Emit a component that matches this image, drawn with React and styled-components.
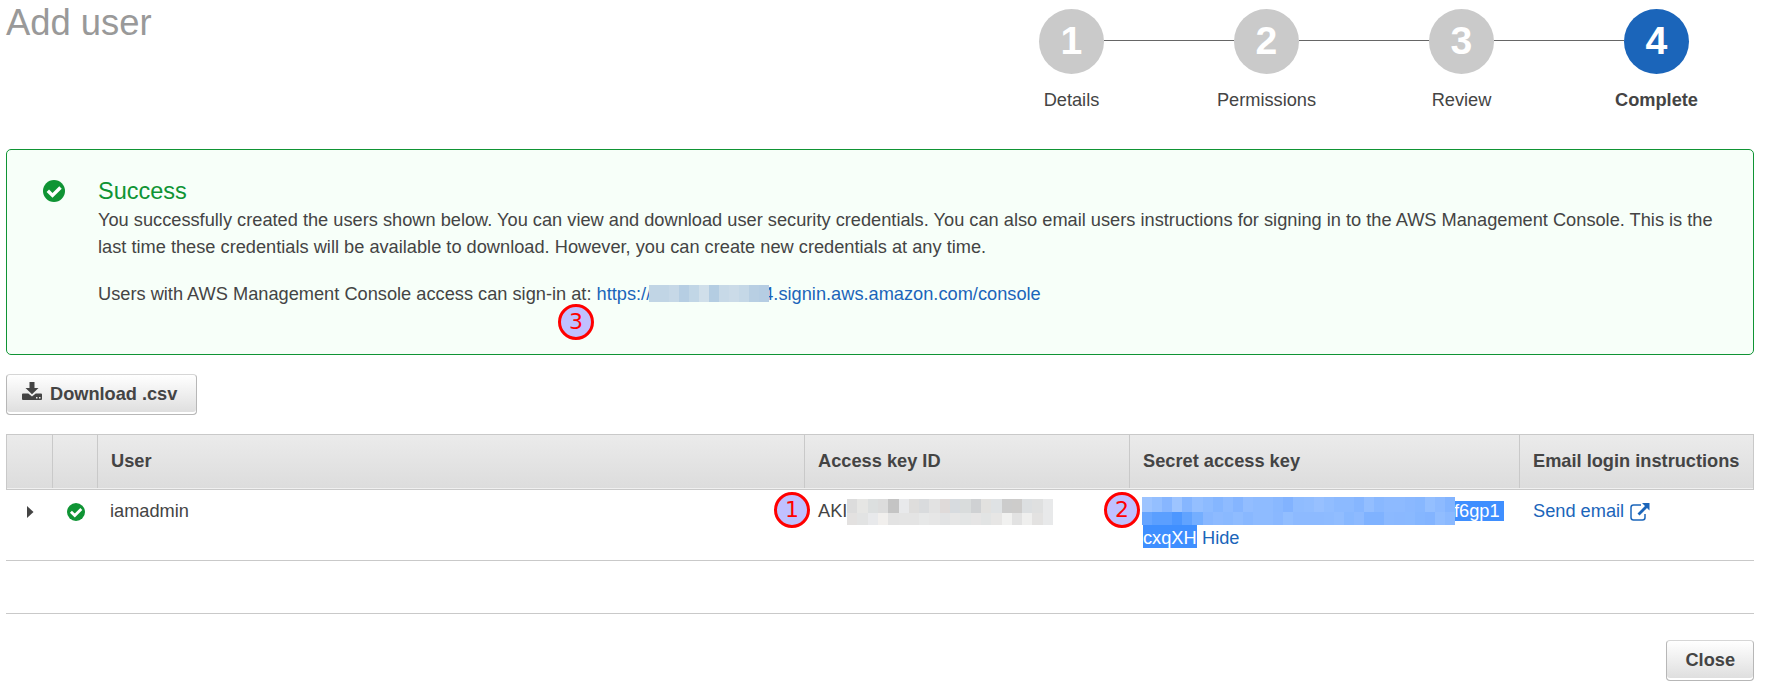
import React from "react";
import styled, { createGlobalStyle } from "styled-components";

const Global = createGlobalStyle`
  body { margin: 0; background: #fff; font-family: "Liberation Sans", Arial, sans-serif; font-size: 18.225px; line-height: 27px; color: #444; }
  * { box-sizing: border-box; }
`;

const Page = styled.main`
  height: 693px;
  padding: 0 15px 0 6px;
  overflow: hidden;
`;
const Header = styled.header`
  display: flex;
  justify-content: space-between;
  height: 149px;
`;
const Title = styled.h1`
  margin: 2px 0 0;
  font-size: 36.4px;
  line-height: 42px;
  font-weight: 400;
  color: #999;
`;
const Steps = styled.ol`
  display: flex;
  margin: 9px 0 0;
  padding: 0;
  list-style: none;
`;
const Step = styled.li`
  width: 195px;
  display: flex;
  flex-direction: column;
  align-items: center;
  font-weight: ${(p) => (p.$active ? 700 : 400)};
`;
const Track = styled.div`
  width: 100%;
  display: flex;
  align-items: flex-start;
`;
const Line = styled.span`
  flex: 1;
  height: 1px;
  margin-top: 31px;
  background: ${(p) => (p.$hidden ? "transparent" : "#666")};
`;
const Circle = styled.span`
  width: 65px;
  height: 65px;
  border-radius: 50%;
  background: ${(p) => (p.$active ? "#1b65ba" : "#cacaca")};
  color: #fff;
  font-size: 39.2px;
  font-weight: 700;
  line-height: 63px;
  text-align: center;
`;
const StepName = styled.span`
  margin-top: 13px;
`;
const Alert = styled.section`
  display: flex;
  height: 206px;
  padding: 27px 36px 0 36px;
  border: 1px solid #0f9434;
  border-radius: 5px;
  background: #f7fff9;
`;
const AlertIcon = styled.div`
  width: 55px;
  padding-top: 3px;
`;
const AlertBody = styled.div`
  flex: 1;
`;
const AlertTitle = styled.h2`
  margin: 0 0 2px;
  font-size: 23.5px;
  line-height: 28px;
  font-weight: 400;
  color: #0f9434;
`;
const Text = styled.p`
  margin: 0 0 20px;
`;
const Link = styled.a`
  color: #1b65ba;
  text-decoration: none;
`;
const Button = styled.button`
  display: flex;
  align-items: center;
  gap: 8px;
  height: 41px;
  padding: ${(p) => p.$pad};
  border: 1px solid #b7b7b7;
  border-top-color: #d6d6d6;
  border-radius: 4px;
  background: linear-gradient(#fff, #ddd);
  box-shadow: inset 0 -2px 0 #fff;
  color: #444;
  font: 700 18.2px "Liberation Sans", Arial, sans-serif;
`;
const Toolbar = styled.div`
  display: flex;
  padding: 19px 0;
`;
const Table = styled.div`
  border-bottom: 1px solid #c9c9c9;
  height: 180px;
`;
const Row = styled.div`
  display: grid;
  grid-template-columns: 46px 45px 707px 325px 390px 1fr;
`;
const HeadRow = styled(Row)`
  height: 56px;
  border: 1px solid #c9c9c9;
  background: linear-gradient(#ebebeb, #dcdcdc);
  box-shadow: inset 0 -1px 0 #f0f0f0;
`;
const HeadCell = styled.div`
  height: 53px;
  padding: 13px 0 0 13px;
  border-right: ${(p) => (p.$last ? 0 : 1)}px solid #c9c9c9;
  font-weight: 700;
  white-space: nowrap;
`;
const BodyRow = styled(Row)`
  height: 71px;
  padding-left: 1px;
  border-bottom: 1px solid #c9c9c9;
`;
const Cell = styled.div`
  position: relative;
  padding: 8px 0 0 ${(p) => (p.$left ?? 13)}px;
  white-space: nowrap;
`;
const IconCell = styled.div`
  padding: 13px 0 0 ${(p) => p.$left}px;
  line-height: 0;
`;
const Selected = styled.span`
  background: #3f8fff;
  color: #fff;
`;
const SecretLine = styled.div`
  display: flex;
  align-items: flex-start;
  height: 27px;
`;
const SelectedBox = styled(Selected)`
  width: ${(p) => p.$w}px;
  height: ${(p) => p.$h}px;
  line-height: ${(p) => p.$lh}px;
  margin-top: ${(p) => p.$top}px;
  margin-right: 5px;
`;
const Gap = styled.span`
  position: relative;
  display: inline-block;
  width: 112px;
  height: 17px;
  vertical-align: -2px;
`;
const Mosaic = styled.span`
  position: absolute;
  left: ${(p) => p.$left}px;
  top: ${(p) => p.$topPos}px;
  display: grid;
  grid-template-columns: repeat(${(p) => p.$cols}, 1fr);
  grid-template-rows: ${(p) => p.$rows};
  width: ${(p) => p.$w}px;
`;
const Tile = styled.i`
  background: ${(p) => p.$c};
`;
const LinkLine = styled.p`
  position: relative;
  margin: 0;
`;
const Marker = styled.span`
  position: absolute;
  left: ${(p) => p.$x}px;
  top: ${(p) => p.$y}px;
  width: 36px;
  height: 36px;
  border: 3px solid #f00;
  border-radius: 50%;
  background: #c0c0ff;
  color: #f00;
  font: 22px/30px "DejaVu Sans", sans-serif;
  text-align: center;
`;
const Footer = styled.footer`
  display: flex;
  justify-content: flex-end;
  padding-top: 26px;
`;

const urlTiles = ["#c1d5e5", "#c1d5e5", "#c6d8e7", "#b6cee3", "#c1d6e6", "#d0dfea", "#b4cde2", "#c7d9e7", "#cbdbe8", "#c5d8e7", "#b8cfe3", "#b5cde3"];
const keyTiles = [
  "#dcdcdc", "#e6e6e4", "#dcdfdf", "#dcdcdc", "#c4c4c4", "#e8e9eb", "#dedddc", "#d9dbdd", "#e2e2e2", "#dfdad9",
  "#d7dbdf", "#d9dcdc", "#cfd1d3", "#e2e1df", "#dfe2e4", "#cccccc", "#cdcccb", "#dcdfe1", "#dfe0e0", "#e8e9ea",
  "#e3e1e0", "#e2e3e3", "#e8e9eb", "#f1efed", "#e3e3e3", "#e4e4e4", "#e4e4e4", "#e7e8e8", "#e6e6e6", "#e2e3e4",
  "#e6e6e6", "#e3e5e5", "#e6e5e5", "#e2e4e4", "#e7e6e5", "#f1f1f0", "#e2e2e2", "#efefee", "#e3e2e1", "#e8e9ea",
];
const secretTiles = [
  "#9dc4ff", "#94bfff", "#87b6ff", "#9dc4ff", "#86b6ff", "#94bfff", "#8dbbff", "#85b6ff", "#8ebbff", "#85b5ff", "#92bdff", "#8ebbff", "#8ebbff", "#89b8ff", "#82b3ff", "#8fbcff",
  "#91bdff", "#97c0ff", "#91bdff", "#8cbaff", "#8cbaff", "#86b6ff", "#93beff", "#89b8ff", "#8dbaff", "#8dbaff", "#8ab8ff", "#87b7ff", "#94bfff", "#8dbaff", "#83b4ff",
  "#66a5ff", "#5b9fff", "#5b9fff", "#4d97ff", "#61a3ff", "#74aeff", "#88b7ff", "#8dbaff", "#8ab9ff", "#8fbcff", "#89b8ff", "#8ebbff", "#8ebbff", "#8ab8ff", "#92beff", "#8dbaff",
  "#8dbaff", "#8dbaff", "#8ebbff", "#91bdff", "#88b8ff", "#8dbaff", "#7fb2ff", "#7fb2ff", "#8bb9ff", "#8ab8ff", "#8ab9ff", "#85b6ff", "#83b4ff", "#91bdff", "#8bb9ff",
];
const steps = ["Details", "Permissions", "Review", "Complete"];

const Check = ({ size }) => (
  <svg width={size} height={size} viewBox="0 0 22 22">
    <circle cx="11" cy="11" r="11" fill="#0f9434" />
    <path d="M4.800 10.800l4.700 4.600 8-8" fill="none" stroke="#fff" strokeWidth="3.500" />
  </svg>
);
const DownloadShape = styled.svg`
  margin-bottom: 7px;
`;
const DownloadIcon = () => (
  <DownloadShape width="20" height="18" viewBox="0 0 20 18" fill="#444">
    <path d="M7.500 0h5v6h4L10 12.300 3.500 6h4z" />
    <path fillRule="evenodd" d="M1 11.500h5.300l3.700 3 3.700-3H19q1 0 1 1V17q0 1-1 1H1q-1 0-1-1v-4.500q0-1 1-1zM14 15v1.500h1.500V15zM17 15v1.500h1.500V15z" />
  </DownloadShape>
);
const ExternalIcon = () => (
  <svg width="20" height="18" viewBox="0 0 20 18">
    <path d="M11 2H3.500Q1 2 1 4.500v10Q1 17 3.500 17h9q2.500 0 2.500-2.500V11" fill="none" stroke="#1b65ba" strokeWidth="1.500" />
    <path d="M12 0h7.500v7.500L17 5l-7.500 7.500-2-2L15 3z" fill="#1b65ba" />
  </svg>
);
const Tiles = ({ colors }) => colors.map((c, i) => <Tile key={i} $c={c} />);
const IconLink = styled(Link)`
  display: inline-flex;
  align-items: center;
  gap: 6px;
`;

export default function App() {
  return (
    <Page>
      <Global />
      <Header>
        <Title>Add user</Title>
        <Steps>
          {steps.map((name, i) => (
            <Step key={name} $active={i === 3}>
              <Track>
                <Line $hidden={i === 0} />
                <Circle $active={i === 3}>{i + 1}</Circle>
                <Line $hidden={i === 3} />
              </Track>
              <StepName>{name}</StepName>
            </Step>
          ))}
        </Steps>
      </Header>
      <Alert>
        <AlertIcon><Check size={22} /></AlertIcon>
        <AlertBody>
          <AlertTitle>Success</AlertTitle>
          <Text>
            You successfully created the users shown below. You can view and download user security credentials. You can also email users instructions for signing in to the AWS Management Console. This is the last time these credentials will be available to download. However, you can create new credentials at any time.
          </Text>
          <LinkLine>
            Users with AWS Management Console access can sign-in at:{" "}
            <Link>
              https://
              <Gap>
                <Mosaic $left={-2} $topPos={0} $cols={12} $rows="17px" $w={120}><Tiles colors={urlTiles} /></Mosaic>
              </Gap>
              4.signin.aws.amazon.com/console
            </Link>
            <Marker $x={460} $y={23}>3</Marker>
          </LinkLine>
        </AlertBody>
      </Alert>
      <Toolbar>
        <Button $pad="0 19px 0 15px"><DownloadIcon />Download .csv</Button>
      </Toolbar>
      <Table>
        <HeadRow>
          <HeadCell /><HeadCell />
          <HeadCell>User</HeadCell>
          <HeadCell>Access key ID</HeadCell>
          <HeadCell>Secret access key</HeadCell>
          <HeadCell $last>Email login instructions</HeadCell>
        </HeadRow>
        <BodyRow>
          <IconCell $left={20}>
            <svg width="7" height="18" viewBox="0 0 7 18"><path d="M0 3l6.500 6L0 15z" fill="#444" /></svg>
          </IconCell>
          <IconCell $left={14}><Check size={18} /></IconCell>
          <Cell $left={12}>iamadmin</Cell>
          <Cell>
            AKI
            <Mosaic $left={42} $topPos={9} $cols={20} $rows="14px 12px" $w={206}><Tiles colors={keyTiles} /></Mosaic>
            <Marker $x={-31} $y={2}>1</Marker>
          </Cell>
          <Cell>
            <SecretLine style={{ paddingLeft: 311 }}><SelectedBox $w={50} $h={20} $lh={21} $top={3}>f6gp1&nbsp;</SelectedBox></SecretLine>
            <SecretLine><SelectedBox $w={54} $h={23} $lh={27} $top={0}>cxqXH</SelectedBox><Link>Hide</Link></SecretLine>
            <Mosaic $left={12} $topPos={7} $cols={31} $rows="15px 13px" $w={313}><Tiles colors={secretTiles} /></Mosaic>
            <Marker $x={-26} $y={2}>2</Marker>
          </Cell>
          <Cell><IconLink>Send email <ExternalIcon /></IconLink></Cell>
        </BodyRow>
      </Table>
      <Footer><Button $pad="0 18px">Close</Button></Footer>
    </Page>
  );
}
